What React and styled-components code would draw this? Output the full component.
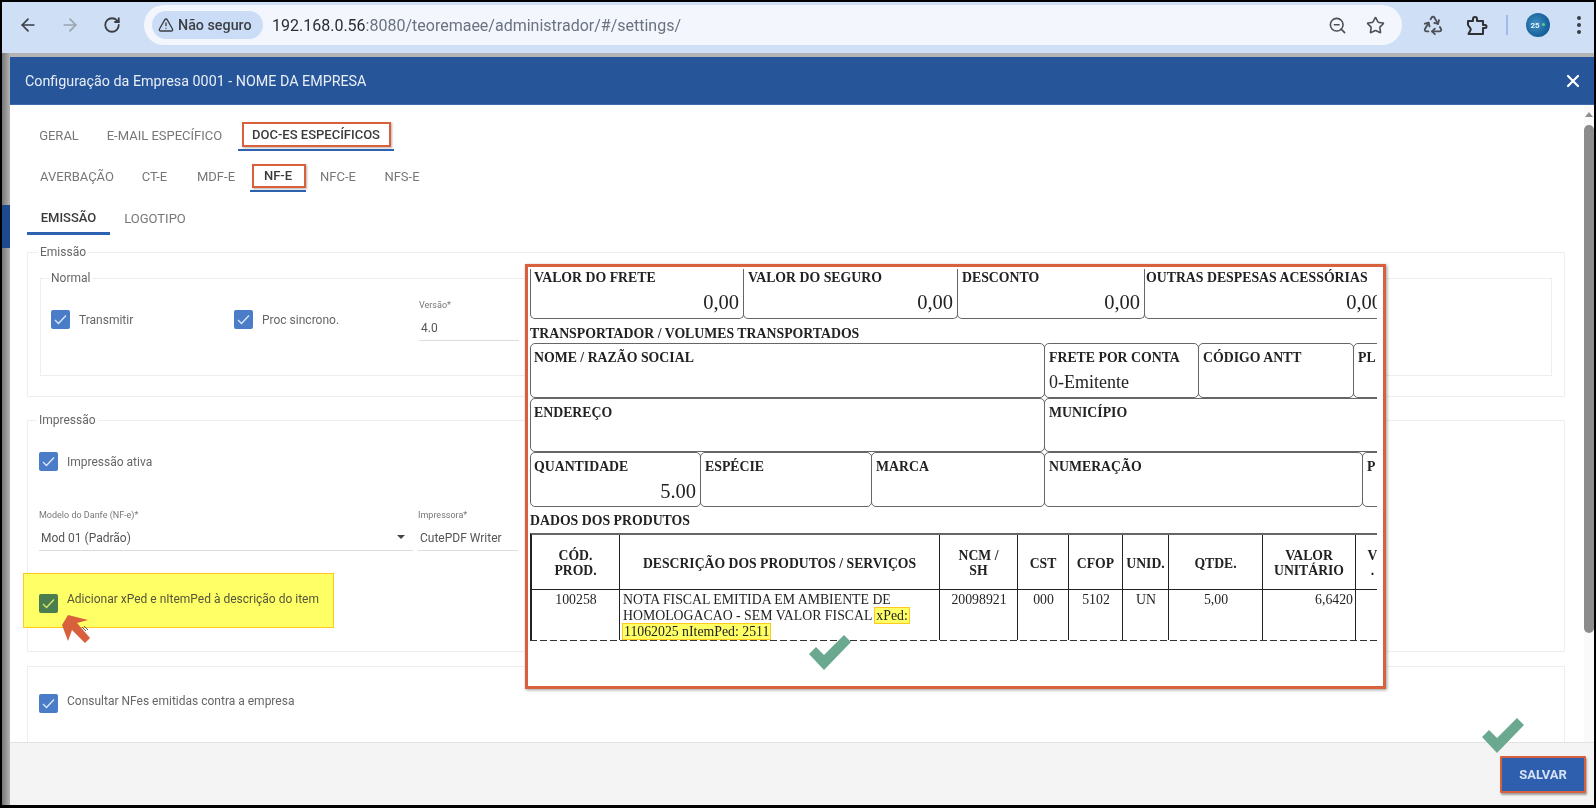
import styled, { createGlobalStyle } from "styled-components";
import { ArrowLeft, ArrowRight, RotateCw, ZoomOut, Star, Recycle, TriangleAlert, X } from "lucide-react";

const GlobalStyle = createGlobalStyle`
  html, body {
    margin: 0;
    background: #000;
  }
  * {
    box-sizing: border-box;
  }
`;

const Screen = styled.div`
  position: relative;
  width: 1596px;
  height: 808px;
  padding: 2px 2px 3px;
  background: #000;
  display: flex;
  flex-direction: column;
  overflow: hidden;
  font-family: Roboto, "Liberation Sans", sans-serif;
  filter: blur(0.35px);
`;

const Toolbar = styled.div`
  height: 51px;
  flex: none;
  background: #cfdff6;
  display: flex;
  align-items: center;
  padding: 0 0 5px 14px;
  color: #333;
`;

const NavButton = styled.div`
  width: 24px;
  height: 24px;
  margin-right: ${(p) => p.$gap}px;
  color: ${(p) => (p.$off ? "#9aa3ae" : "#3a3d42")};
  display: flex;
  align-items: center;
  justify-content: center;
`;

const Omnibox = styled.div`
  width: 1258px;
  height: 40px;
  margin-left: 3px;
  border-radius: 20px;
  background: #f3f7fd;
  display: flex;
  align-items: center;
  padding: 0 8px;
`;

const SecurityChip = styled.div`
  width: 111px;
  height: 28px;
  border-radius: 14px;
  background: #cbddf6;
  display: flex;
  align-items: center;
  gap: 4px;
  padding-left: 6px;
  font-size: 14.3px;
  font-weight: 500;
  color: #3b3f46;
  white-space: nowrap;
`;

const Url = styled.div`
  margin-left: 9px;
  font-size: 16px;
  color: #6b7280;
  flex: 1;
  b {
    font-weight: 400;
    color: #2a2d33;
  }
`;

const OmniIcon = styled.div`
  width: 38px;
  display: flex;
  justify-content: center;
  color: #4b4f56;
`;

const ExtensionTray = styled.div`
  margin-left: 20px;
  display: flex;
  align-items: center;
  gap: 20px;
  color: #4b4f56;
`;

const TrayDivider = styled.div`
  width: 2px;
  height: 20px;
  background: #9dbbe8;
  margin: 0 -2px;
`;

const Avatar = styled.div`
  position: relative;
  width: 24px;
  height: 24px;
  border-radius: 50%;
  background: radial-gradient(circle at 40% 45%, #3f8fc4, #125a94 75%);
  color: #e8f2fa;
  font-size: 8px;
  font-weight: 700;
  display: flex;
  align-items: center;
  justify-content: center;
  padding-right: 6px;
  &::after {
    content: "";
    position: absolute;
    right: 5px;
    top: 10px;
    width: 3px;
    height: 3px;
    border-radius: 50%;
    background: #5fd08a;
  }
`;

const MenuDots = styled.div`
  margin-left: 7px;
  display: flex;
  flex-direction: column;
  gap: 3px;
  i {
    display: block;
    width: 4px;
    height: 4px;
    border-radius: 50%;
    background: #3a3d42;
  }
`;

const Backdrop = styled.div`
  position: relative;
  flex: 1;
  min-height: 0;
  padding: 4px 0 0 8px;
  background: linear-gradient(90deg, #777 0, #b4b4b4 8px);
  display: flex;
`;

const SidebarStub = styled.div`
  position: absolute;
  left: 0;
  top: 152px;
  width: 8px;
  height: 43px;
  background: #1d4a8f;
`;

const Modal = styled.div`
  flex: 1;
  min-width: 0;
  display: flex;
  flex-direction: column;
  background: #fff;
`;

const ModalHeader = styled.div`
  height: 48px;
  flex: none;
  background: #26559a;
  border-bottom: 1px solid #3d6bb0;
  display: flex;
  align-items: center;
  justify-content: space-between;
  padding: 0 11px 0 15px;
  color: #e9eef6;
  font-size: 14.3px;
  svg {
    color: #fff;
  }
`;

const ModalBody = styled.div`
  flex: 1;
  min-height: 0;
  display: flex;
  overflow: hidden;
`;

const Content = styled.div`
  flex: 1;
  min-width: 0;
  padding: 17px 19px 0 17px;
`;

const Scrollbar = styled.div`
  width: 10px;
  flex: none;
  background: #fafafa;
  padding-top: 7px;
`;

const ScrollArrow = styled.div`
  width: 0;
  margin: 0 auto 8px;
  border-left: 4px solid transparent;
  border-right: 4px solid transparent;
  border-bottom: 5px solid #8f8f8f;
`;

const ScrollThumb = styled.div`
  height: 508px;
  background: #8c8c8c;
  border-radius: 5px;
`;

const TabRow = styled.div`
  height: ${(p) => p.$height}px;
  display: flex;
  align-items: flex-start;
`;

const Tab = styled.div`
  position: relative;
  width: ${(p) => p.$width}px;
  height: ${(p) => p.$height}px;
  padding-bottom: 3px;
  display: flex;
  align-items: center;
  justify-content: center;
  font-size: 13px;
  font-weight: ${(p) => (p.$active ? 500 : 400)};
  color: ${(p) => (p.$active ? "#3a3a3a" : "#777")};
  white-space: nowrap;
  border-bottom: ${(p) => (p.$line ? `${p.$line}px solid #2d62b0` : "none")};
`;

const RedMark = styled.span`
  position: absolute;
  top: 0;
  bottom: 2px;
  left: ${(p) => p.$left}px;
  right: ${(p) => p.$right}px;
  border: 2px solid #d9603c;
  box-shadow: 1px 1px 2px rgba(0, 0, 0, 0.3);
`;

const FieldBox = styled.fieldset`
  margin: ${(p) => p.$margin || "0"};
  padding: ${(p) => p.$padding || "0"};
  height: ${(p) => p.$height}px;
  min-width: 0;
  border: 1px solid #eeeeee;
  legend {
    margin-left: -2px;
    padding: 0 2px;
    font-size: 12px;
    line-height: 14px;
    color: #666;
  }
`;

const Row = styled.div`
  display: flex;
  align-items: flex-start;
  margin-top: ${(p) => p.$top || 0}px;
`;

const CheckRow = styled.div`
  display: flex;
  width: ${(p) => p.$width || "auto"};
  gap: 9px;
  align-items: flex-start;
  font-size: 12px;
  color: #666;
  span {
    line-height: 16px;
    margin-top: ${(p) => p.$lift ?? 2}px;
  }
`;

const Box = styled.div`
  width: 19px;
  height: 19px;
  flex: none;
  border-radius: 2px;
  background: ${(p) => p.$color || "#4a7cc7"};
  display: flex;
  align-items: center;
  justify-content: center;
`;

const Field = styled.div`
  width: ${(p) => p.$width}px;
  margin-right: ${(p) => p.$gap || 0}px;
  margin-top: ${(p) => p.$top || 0}px;
  flex: none;
  label {
    display: block;
    font-size: 9px;
    line-height: 12px;
    color: #777;
  }
  div {
    position: relative;
    height: 30px;
    border-bottom: 1px solid #dcdcdc;
    padding: 10px 0 0 2px;
    font-size: 12px;
    line-height: 14px;
    color: #555;
    white-space: nowrap;
  }
  i {
    position: absolute;
    right: 8px;
    top: 14px;
    border-left: 4px solid transparent;
    border-right: 4px solid transparent;
    border-top: 4px solid #444;
  }
`;

const YellowMark = styled(CheckRow)`
  width: 311px;
  height: 55px;
  margin: 22px 0 0 -16px;
  padding: 20px 0 0 15px;
  background: #ffff66;
  border: 1px solid #ffc91f;
  span {
    color: #55563a;
  }
`;

const Footer = styled.div`
  height: 63px;
  flex: none;
  background: #f4f4f4;
  border-top: 1px solid #e2e2e2;
  display: flex;
  justify-content: flex-end;
  padding: 13px 8px 0 0;
`;

const SaveButton = styled.button`
  width: 86px;
  height: 37px;
  background: #2d5fae;
  border: 2px solid #d9603c;
  border-radius: 1px;
  box-shadow: 1px 2px 2px rgba(0, 0, 0, 0.35);
  color: #d4e0f3;
  font-family: Roboto, sans-serif;
  font-size: 13px;
  font-weight: 700;
`;

const DanfeFrame = styled.div`
  position: absolute;
  left: 525px;
  top: 264px;
  width: 861px;
  height: 425px;
  background: #fff;
  border: 3px solid #d9603c;
  box-shadow: 1px 1px 3px rgba(0, 0, 0, 0.4);
  padding: 2px 8px 0 2px;
  font-family: "Liberation Serif", serif;
  color: #222;
`;

const DanfeClip = styled.div`
  width: 847px;
  overflow: hidden;
`;

const DanfeRow = styled.div`
  display: flex;
  height: ${(p) => p.$height}px;
  width: 860px;
`;

const DanfeCell = styled.div`
  width: ${(p) => p.$width}px;
  flex: none;
  padding: ${(p) => (p.$open ? 1 : 6)}px 4px 0 ${(p) => p.$left ?? 4}px;
  border: 1px solid #666;
  border-top-width: ${(p) => (p.$open ? 0 : 1)}px;
  border-radius: ${(p) => (p.$open ? "0 0 5px 5px" : "5px")};
  margin-right: -1px;
  white-space: nowrap;
  &:first-child {
    padding-left: 3px;
  }
`;

const DanfeLabel = styled.div`
  font-size: 13.8px;
  font-weight: 700;
  line-height: 15px;
`;

const DanfeValue = styled.div`
  font-size: ${(p) => p.$size || 20.5}px;
  line-height: 22px;
  margin-top: 6px;
  text-align: ${(p) => p.$align || "right"};
  padding-right: ${(p) => p.$right ?? 0}px;
`;

const DanfeHeading = styled.div`
  height: ${(p) => p.$height}px;
  display: flex;
  align-items: center;
  padding-top: ${(p) => p.$top || 0}px;
  font-size: 13.8px;
  font-weight: 700;
  white-space: nowrap;
`;

const ProductGrid = styled.div`
  display: grid;
  width: 860px;
  grid-template-columns: 88px 320px 78px 51px 54px 46px 94px 93px 34px;
  grid-template-rows: 55px 50px;
  border-top: 2px solid #666;
  border-left: 2px solid #222;
`;

const DashLine = styled.div`
  width: 860px;
  height: 1px;
  background: repeating-linear-gradient(90deg, #333 0 7px, transparent 7px 10px);
`;

const HeadCell = styled.div`
  display: flex;
  align-items: center;
  justify-content: center;
  text-align: center;
  white-space: pre-line;
  border-right: 1px solid #222;
  border-bottom: 1px solid #222;
  font-size: 13.7px;
  font-weight: 700;
  line-height: 15px;
  padding-top: 2px;
`;

const BodyCell = styled.div`
  border-right: 1px solid #222;
  font-size: 13.8px;
  line-height: 16.2px;
  padding: 2px 2px 0 3px;
  text-align: ${(p) => p.$align || "center"};
  white-space: nowrap;
`;

const Highlight = styled.span`
  background: #ffff66;
  outline: 1px solid #ffc91f;
  padding: 0 1px;
`;

const CheckMark = styled.svg`
  position: absolute;
  left: ${(p) => p.$left}px;
  top: ${(p) => p.$top}px;
`;

const CursorArrow = styled.svg`
  position: absolute;
  left: 61px;
  top: 614px;
`;

const SmallCheck = ({ color = "#dfe9f7" }) => (
  <svg width="13" height="11" viewBox="0 0 13 11" fill="none">
    <path d="M1 6l3.5 3.5L12 1.5" stroke={color} strokeWidth="1.3" />
  </svg>
);

const Teal = ({ left, top }) => (
  <CheckMark $left={left} $top={top} width="44" height="37" viewBox="0 0 44 37">
    <path d="M1 20l7-7 8 8L36 1l7 7-27 28z" fill="#6aa88f" />
  </CheckMark>
);

const PuzzleIcon = () => (
  <svg width="24" height="24" viewBox="0 0 24 24" fill="none" stroke="#2f3135" strokeWidth="2" strokeLinejoin="round">
    <path d="M4 8h5V6a2 2 0 0 1 4 0v2h6v4h2a1.5 1.5 0 0 1 0 3h-2v6H4.5l1.8-3.5a2 2 0 0 0 0-2.5L4 12z" />
  </svg>
);

const mainTabs = [
  { label: "GERAL", width: 64 },
  { label: "E-MAIL ESPECÍFICO", width: 147 },
];

const subTabs = [
  { label: "AVERBAÇÃO", width: 100 },
  { label: "CT-E", width: 55 },
  { label: "MDF-E", width: 68 },
];

const subTabsAfter = [
  { label: "NFC-E", width: 64 },
  { label: "NFS-E", width: 64 },
];

const productHeads = ["CÓD.\nPROD.", "DESCRIÇÃO DOS PRODUTOS / SERVIÇOS", "NCM /\nSH", "CST", "CFOP", "UNID.", "QTDE.", "VALOR\nUNITÁRIO", "V\n."];

export default function App() {
  return (
    <>
      <GlobalStyle />
      <Screen>
        <Toolbar>
          <NavButton $gap={18}><ArrowLeft size={20} /></NavButton>
          <NavButton $gap={18} $off><ArrowRight size={20} /></NavButton>
          <NavButton $gap={17}><RotateCw size={18} strokeWidth={2.4} /></NavButton>
          <Omnibox>
            <SecurityChip>
              <TriangleAlert size={16} />
              Não seguro
            </SecurityChip>
            <Url><b>192.168.0.56</b>:8080/teoremaee/administrador/#/settings/</Url>
            <OmniIcon><ZoomOut size={19} /></OmniIcon>
            <OmniIcon><Star size={19} /></OmniIcon>
          </Omnibox>
          <ExtensionTray>
            <Recycle size={22} />
            <PuzzleIcon />
            <TrayDivider />
            <Avatar>25</Avatar>
            <MenuDots><i /><i /><i /></MenuDots>
          </ExtensionTray>
        </Toolbar>
        <Backdrop>
          <SidebarStub />
          <Modal>
            <ModalHeader>
              Configuração da Empresa 0001 - NOME DA EMPRESA
              <X size={20} strokeWidth={2.6} />
            </ModalHeader>
            <ModalBody>
              <Content>
                <TabRow $height={42}>
                  {mainTabs.map((t) => (
                    <Tab key={t.label} $width={t.width} $height={29}>{t.label}</Tab>
                  ))}
                  <Tab $width={156} $height={29} $active $line={2}>
                    DOC-ES ESPECÍFICOS
                    <RedMark $left={4} $right={3} />
                  </Tab>
                </TabRow>
                <TabRow $height={41}>
                  {subTabs.map((t) => (
                    <Tab key={t.label} $width={t.width} $height={28}>{t.label}</Tab>
                  ))}
                  <Tab $width={56} $height={28} $active $line={2}>
                    NF-E
                    <RedMark $left={2} $right={0} />
                  </Tab>
                  {subTabsAfter.map((t) => (
                    <Tab key={t.label} $width={t.width} $height={28}>{t.label}</Tab>
                  ))}
                </TabRow>
                <TabRow $height={40}>
                  <Tab $width={83} $height={30} $active $line={3}>EMISSÃO</Tab>
                  <Tab $width={90} $height={30}>LOGOTIPO</Tab>
                </TabRow>

                <FieldBox $height={152} $padding="0 12px">
                  <legend>Emissão</legend>
                  <FieldBox $height={105} $margin="12px 0 0" $padding="25px 10px 0">
                    <legend>Normal</legend>
                    <Row>
                      <CheckRow $width="183px">
                        <Box><SmallCheck /></Box>
                        <span>Transmitir</span>
                      </CheckRow>
                      <CheckRow $width="185px">
                        <Box><SmallCheck /></Box>
                        <span>Proc sincrono.</span>
                      </CheckRow>
                      <Field $width={100} $top={-11}>
                        <label>Versão*</label>
                        <div>4.0</div>
                      </Field>
                    </Row>
                  </FieldBox>
                </FieldBox>

                <FieldBox $height={239} $margin="16px 0 0" $padding="25px 11px 0">
                  <legend>Impressão</legend>
                  <CheckRow>
                    <Box><SmallCheck /></Box>
                    <span>Impressão ativa</span>
                  </CheckRow>
                  <Row $top={38}>
                    <Field $width={374} $gap={5}>
                      <label>Modelo do Danfe (NF-e)*</label>
                      <div>Mod 01 (Padrão)<i /></div>
                    </Field>
                    <Field $width={100}>
                      <label>Impressora*</label>
                      <div>CutePDF Writer</div>
                    </Field>
                  </Row>
                  <YellowMark $lift={-3}>
                    <Box $color="#4c7d4e"><SmallCheck color="#d9e86a" /></Box>
                    <span>Adicionar xPed e nItemPed à descrição do item</span>
                  </YellowMark>
                </FieldBox>

                <FieldBox $height={120} $margin="14px 0 0" $padding="27px 11px 0">
                  <CheckRow $lift={-1}>
                    <Box><SmallCheck /></Box>
                    <span>Consultar NFes emitidas contra a empresa</span>
                  </CheckRow>
                </FieldBox>
              </Content>
              <Scrollbar>
                <ScrollArrow />
                <ScrollThumb />
              </Scrollbar>
            </ModalBody>
            <Footer>
              <SaveButton>SALVAR</SaveButton>
            </Footer>
          </Modal>
        </Backdrop>

        <DanfeFrame>
          <DanfeClip>
            <DanfeRow $height={50}>
              <DanfeCell $width={214} $open>
                <DanfeLabel>VALOR DO FRETE</DanfeLabel>
                <DanfeValue>0,00</DanfeValue>
              </DanfeCell>
              <DanfeCell $width={215} $open>
                <DanfeLabel>VALOR DO SEGURO</DanfeLabel>
                <DanfeValue>0,00</DanfeValue>
              </DanfeCell>
              <DanfeCell $width={188} $open>
                <DanfeLabel>DESCONTO</DanfeLabel>
                <DanfeValue>0,00</DanfeValue>
              </DanfeCell>
              <DanfeCell $width={250} $open $left={1}>
                <DanfeLabel>OUTRAS DESPESAS ACESSÓRIAS</DanfeLabel>
                <DanfeValue $right={7}>0,00</DanfeValue>
              </DanfeCell>
            </DanfeRow>
            <DanfeHeading $height={24} $top={6}>TRANSPORTADOR / VOLUMES TRANSPORTADOS</DanfeHeading>
            <DanfeRow $height={55}>
              <DanfeCell $width={515}><DanfeLabel>NOME / RAZÃO SOCIAL</DanfeLabel></DanfeCell>
              <DanfeCell $width={155}>
                <DanfeLabel>FRETE POR CONTA</DanfeLabel>
                <DanfeValue $align="left" $size={18}>0-Emitente</DanfeValue>
              </DanfeCell>
              <DanfeCell $width={156}><DanfeLabel>CÓDIGO ANTT</DanfeLabel></DanfeCell>
              <DanfeCell $width={60}><DanfeLabel>PL</DanfeLabel></DanfeCell>
            </DanfeRow>
            <DanfeRow $height={54}>
              <DanfeCell $width={515}><DanfeLabel>ENDEREÇO</DanfeLabel></DanfeCell>
              <DanfeCell $width={360}><DanfeLabel>MUNICÍPIO</DanfeLabel></DanfeCell>
            </DanfeRow>
            <DanfeRow $height={55}>
              <DanfeCell $width={171}>
                <DanfeLabel>QUANTIDADE</DanfeLabel>
                <DanfeValue>5.00</DanfeValue>
              </DanfeCell>
              <DanfeCell $width={172}><DanfeLabel>ESPÉCIE</DanfeLabel></DanfeCell>
              <DanfeCell $width={174}><DanfeLabel>MARCA</DanfeLabel></DanfeCell>
              <DanfeCell $width={319}><DanfeLabel>NUMERAÇÃO</DanfeLabel></DanfeCell>
              <DanfeCell $width={60}><DanfeLabel>P</DanfeLabel></DanfeCell>
            </DanfeRow>
            <DanfeHeading $height={26} $top={2}>DADOS DOS PRODUTOS</DanfeHeading>
            <ProductGrid>
              {productHeads.map((h) => (
                <HeadCell key={h}>{h}</HeadCell>
              ))}
              <BodyCell>100258</BodyCell>
              <BodyCell $align="left">
                NOTA FISCAL EMITIDA EM AMBIENTE DE<br />
                HOMOLOGACAO - SEM VALOR FISCAL <Highlight>xPed:</Highlight><br />
                <Highlight>11062025 nItemPed: 2511</Highlight>
              </BodyCell>
              <BodyCell>20098921</BodyCell>
              <BodyCell>000</BodyCell>
              <BodyCell>5102</BodyCell>
              <BodyCell>UN</BodyCell>
              <BodyCell>5,00</BodyCell>
              <BodyCell $align="right">6,6420</BodyCell>
              <BodyCell />
            </ProductGrid>
            <DashLine />
          </DanfeClip>
        </DanfeFrame>

        <Teal left={808} top={634} />
        <Teal left={1481} top={717} />
        <CursorArrow width="30" height="30" viewBox="0 0 30 30">
          <path d="M7 1L27 6l-11 3L29 24l-5 5L11 16 7 27 1 11z" fill="#d9603c" />
          <path d="M21 13l4 4M23 12l4 4" stroke="#333" strokeWidth="0.8" />
        </CursorArrow>
      </Screen>
    </>
  );
}
